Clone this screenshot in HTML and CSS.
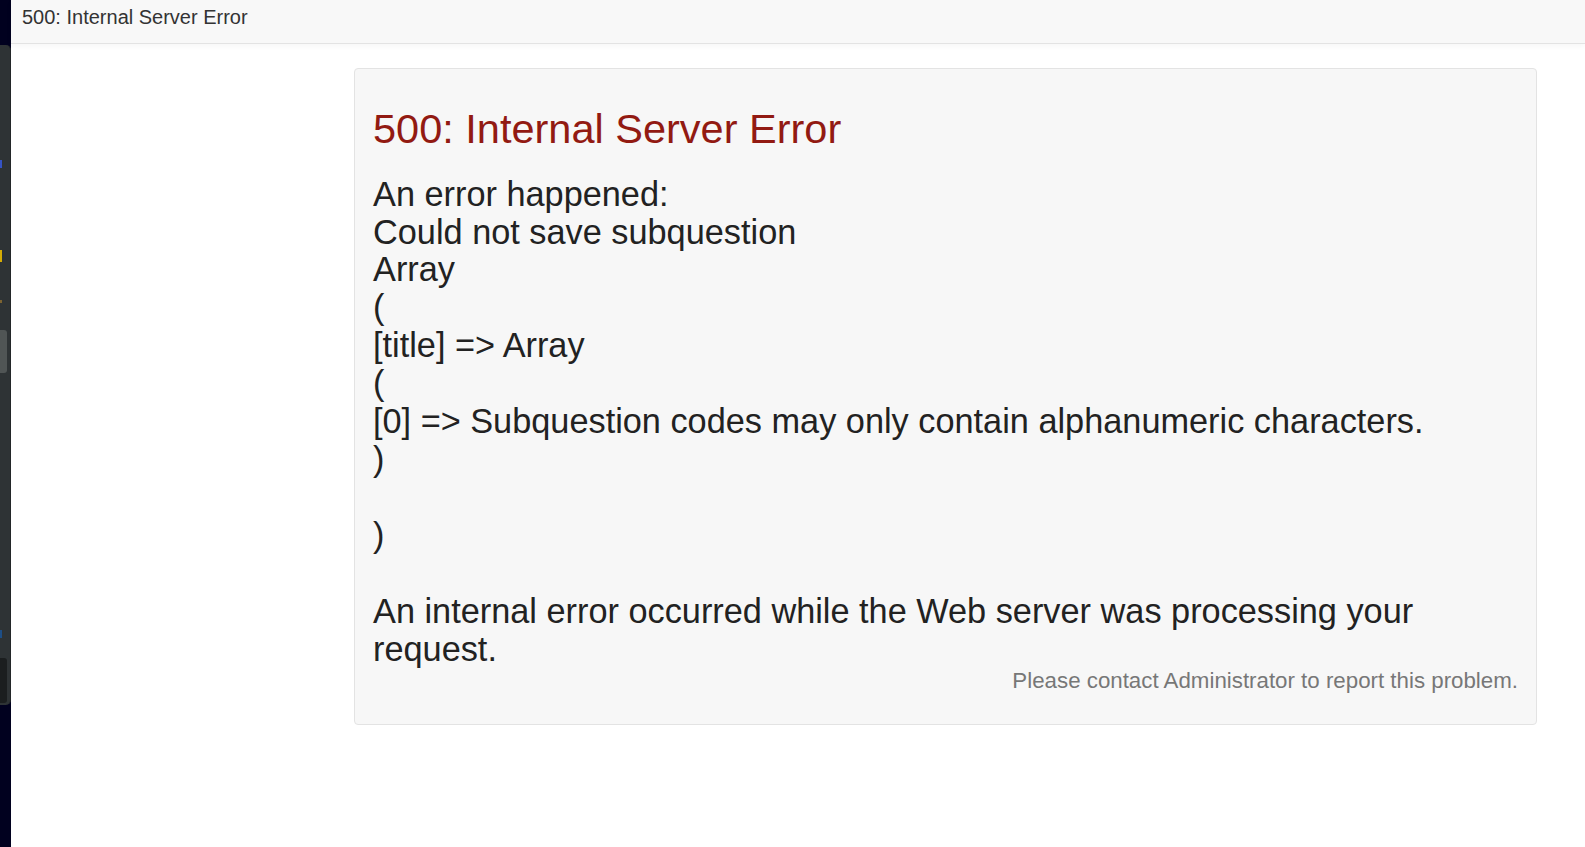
FILE: index.html
```html
<!DOCTYPE html>
<html lang="en">
<head>
<meta charset="utf-8">
<title>500: Internal Server Error</title>
<link rel="stylesheet" href="styles.css">
</head>
<body>
<div class="page">
  <aside class="strip">
    <div class="panel">
      <span class="mark mark-blue"></span>
      <span class="mark mark-yellow"></span>
      <span class="mark mark-brown"></span>
      <span class="block block-light"></span>
      <span class="mark mark-blue2"></span>
      <span class="block block-dark"></span>
    </div>
  </aside>
  <main class="main">
    <header class="topbar">500: Internal Server Error</header>
    <section class="content">
      <div class="well">
        <h1 class="title">500: Internal Server Error</h1>
        <p class="msg">An error happened:<br>Could not save subquestion<br>Array<br>(<br>[title] =&gt; Array<br>(<br>[0] =&gt; Subquestion codes may only contain alphanumeric characters.<br>)<br><br>)<br><br>An internal error occurred while the Web server was processing your request.</p>
        <p class="contact">Please contact Administrator to report this problem.</p>
      </div>
    </section>
  </main>
</div>
</body>
</html>
```

FILE: styles.css
```css
html, body {
  margin: 0;
  padding: 0;
  height: 100%;
  background: #ffffff;
  font-family: "Liberation Sans", Arial, sans-serif;
}

.page {
  display: flex;
  height: 847px;
  overflow: hidden;
}

.strip {
  flex: 0 0 11px;
  background: #01011f;
  padding-top: 45px;
  box-sizing: border-box;
}

.panel {
  height: 660px;
  width: 11px;
  box-sizing: border-box;
  background: #2e3335;
  border-right: 1px solid #232729;
  border-radius: 0 5px 5px 0;
  display: flex;
  flex-direction: column;
}

.mark {
  display: block;
  width: 2px;
}

.mark-blue { margin-top: 115px; height: 8px; background: #3553c4; }
.mark-yellow { margin-top: 82px; height: 12px; background: #d6ad05; }
.mark-brown { margin-top: 38px; height: 3px; background: #7d6431; }

.block {
  display: block;
  width: 7px;
  border-radius: 0 3px 3px 0;
}

.block-light { margin-top: 27px; height: 43px; background: #505555; }
.mark-blue2 { margin-top: 257px; height: 8px; background: #1d4e86; }
.block-dark { margin-top: 20px; height: 45px; background: #1b1e1f; }

.main {
  flex: 1 1 auto;
  display: flex;
  flex-direction: column;
  min-width: 0;
}

.topbar {
  height: 44px;
  box-sizing: border-box;
  padding: 6px 11px 0;
  background: #f8f8f8;
  border-bottom: 1px solid #e3e3e3;
  box-shadow: 0 2px 6px rgba(0, 0, 0, 0.04);
  color: #333333;
  font-size: 20px;
  line-height: 23px;
}

.content {
  padding: 24px 48px 0 343px;
}

.well {
  background: #f7f7f7;
  border: 1px solid #e3e3e3;
  border-radius: 4px;
  padding: 18px;
}

.title {
  margin: 19px 0 24px;
  font-size: 41.5px;
  font-weight: normal;
  line-height: 1.1;
  color: #921a12;
}

.msg {
  margin: 0;
  font-size: 34.3px;
  line-height: 37.9px;
  color: #222222;
}

.contact {
  margin: 1px 0 12px;
  text-align: right;
  font-size: 22.3px;
  line-height: 24.5px;
  color: #777777;
}
```
